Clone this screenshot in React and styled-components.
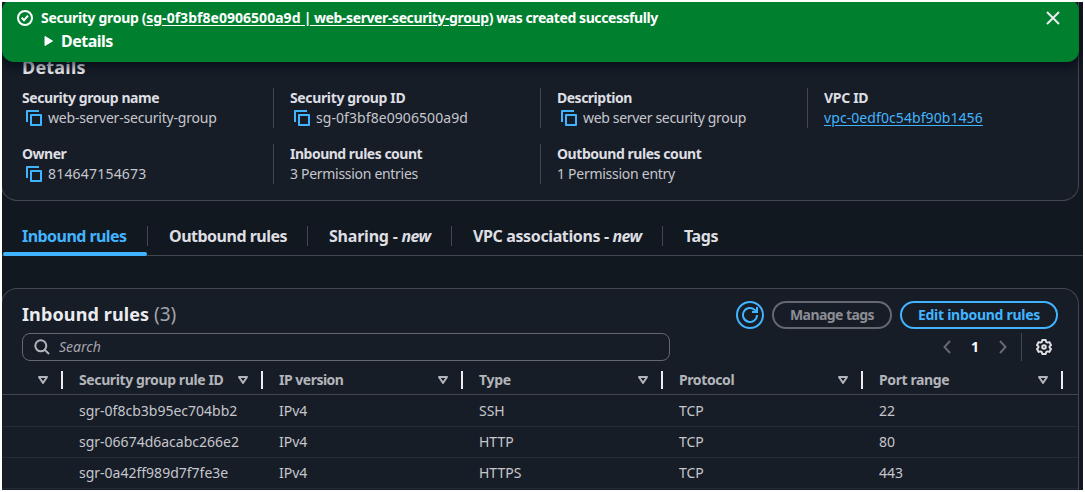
import React from "react";
import styled, { createGlobalStyle } from "styled-components";

const GlobalStyle = createGlobalStyle`
  *, *::before, *::after { box-sizing: border-box; }
  html, body { margin: 0; background: #fff; }
  body { font-family: "Noto Sans", "Open Sans", sans-serif; font-size: 14px; line-height: 20px; color: #c6c6cd; }
`;

const Frame = styled.div`
  position: relative;
  width: 1081px;
  height: 488px;
  margin: 2px;
  overflow: hidden;
  background: #12181f;
`;

const T = styled.span`
  white-space: pre;
  letter-spacing: ${(p) => p.$ls || 0}px;
`;

/* Success notification pinned over the scrolled page */
const Flash = styled.div`
  position: absolute;
  top: -3px;
  left: 0;
  z-index: 2;
  width: 1077px;
  height: 63px;
  padding: 9px 18px 0 15px;
  display: flex;
  align-items: flex-start;
  gap: 8px;
  border-radius: 12px;
  background: #00802f;
  color: #fff;
  box-shadow: 0 4px 8px 1px rgba(0, 7, 22, 0.6);
`;
const FlashIcon = styled.svg`
  width: 16px;
  height: 16px;
  margin-top: 2px;
  flex: none;
`;
const FlashBody = styled.div`
  flex: 1;
  font-weight: 700;
`;
const FlashLine = styled.div`
  height: 21px;
  line-height: 20px;
  white-space: pre;
`;
const FlashLink = styled.a`
  color: inherit;
  text-decoration: underline;
  text-underline-offset: 2px;
`;
const FlashToggle = styled.div`
  display: flex;
  align-items: center;
  gap: 8px;
  height: 24px;
  padding-left: 3px;
  font-size: 16px;
  line-height: 24px;
`;
const CloseIcon = styled.svg`
  width: 16px;
  height: 16px;
  margin-top: 2px;
  flex: none;
`;

const Card = styled.section`
  width: 1078px;
  margin-left: -1px;
  background: #161d26;
  border: 1px solid #424650;
  border-radius: 16px;
`;
const DetailsCard = styled(Card)`
  height: 199px;
  border-top: 0;
  border-radius: 0 0 16px 16px;
  padding: 53px 0 0 20px;
`;
const CardTitle = styled.h2`
  margin: 0;
  font-size: 18px;
  line-height: 24px;
  font-weight: 700;
  color: #ebebf0;
`;
const DetailsGrid = styled.div`
  display: grid;
  grid-template-columns: repeat(4, 267px);
  row-gap: 16px;
  margin-top: 9px;
`;
const Field = styled.div`
  height: 40px;
  padding-left: ${(p) => (p.$first ? 0 : 16)}px;
  margin-left: ${(p) => (p.$first ? 0 : -16)}px;
  border-left: ${(p) => (p.$first ? "0" : "1px solid #424650")};
`;
const FieldLabel = styled.div`
  height: 20px;
  font-weight: 700;
  color: #dedee3;
`;
const FieldValue = styled.div`
  display: flex;
  align-items: center;
  height: 20px;
  gap: 6px;
  padding-left: ${(p) => (p.$copy ? 4 : 0)}px;
`;
const VpcLink = styled.a`
  color: #42b4ff;
  text-decoration: underline;
  text-underline-offset: 2px;
`;

const Tabs = styled.nav`
  display: flex;
  height: 55px;
  padding-top: 16px;
  border-bottom: 1px solid #424650;
`;
const Tab = styled.div`
  position: relative;
  width: ${(p) => p.$w}px;
  height: 38px;
  padding: 9px 0 0 ${(p) => (p.$active ? 20 : 21)}px;
  font-size: 16px;
  line-height: 20px;
  font-weight: 700;
  white-space: pre;
  color: ${(p) => (p.$active ? "#42b4ff" : "#dedee3")};
  &:not(:last-child)::after {
    content: "";
    position: absolute;
    right: 0;
    top: 9px;
    width: 1px;
    height: 20px;
    background: #424650;
  }
`;
const ActiveBar = styled.span`
  position: absolute;
  left: 1px;
  bottom: -1px;
  width: 144px;
  height: 4px;
  border-radius: 2px;
  background: #42b4ff;
`;

const RulesCard = styled(Card)`
  height: 240px;
  margin-top: 32px;
  border-bottom: 0;
  border-radius: 16px 16px 0 0;
`;
const RulesHeader = styled.header`
  display: flex;
  align-items: flex-start;
  height: 44px;
  padding: 12px 20px 0 20px;
`;
const RulesTitle = styled(CardTitle)`
  margin-top: 1px;
`;
const Count = styled.span`
  font-weight: 400;
  font-size: 19px;
  line-height: 20px;
  color: #a4a4ad;
`;
const Actions = styled.div`
  display: flex;
  gap: 8px;
  margin-left: auto;
`;
const Button = styled.button`
  display: flex;
  align-items: center;
  justify-content: center;
  width: ${(p) => p.$w}px;
  height: 28px;
  padding: 0;
  border: 2px solid ${(p) => (p.disabled ? "#656871" : "#42b4ff")};
  border-radius: 20px;
  background: transparent;
  font: 700 14px/20px "Noto Sans", sans-serif;
  color: ${(p) => (p.disabled ? "#8c8c94" : "#42b4ff")};
`;
const Toolbar = styled.div`
  display: flex;
  align-items: center;
  height: 28px;
  padding: 0 26px 0 20px;
`;
const Search = styled.div`
  display: flex;
  align-items: center;
  gap: 9px;
  width: 648px;
  height: 28px;
  padding-left: 11px;
  border: 1px solid #656871;
  border-radius: 8px;
  color: #a4a4ad;
  font-style: italic;
`;
const Pager = styled.div`
  display: flex;
  align-items: center;
  margin-left: auto;
  height: 28px;
`;
const PageNumber = styled.span`
  width: 48px;
  text-align: center;
  font-weight: 700;
  color: #fff;
`;
const Divider = styled.span`
  width: 1px;
  height: 28px;
  margin: 0 14px;
  background: #424650;
`;

const Row = styled.div`
  display: grid;
  grid-template-columns: 61px repeat(5, 200px) 15px;
  align-items: center;
  height: ${(p) => p.$h || 31}px;
  border-bottom: 1px solid #232b37;
  color: #c6c6cd;
`;
const HeadRow = styled(Row)`
  height: 34px;
  border-bottom-color: #424650;
  font-weight: 700;
  color: #b4b4bb;
`;
const Cell = styled.div`
  padding-left: 16px;
`;
const HeadCell = styled.div`
  display: flex;
  align-items: center;
  justify-content: space-between;
  height: 18px;
  margin-top: 4px;
  padding: 0 13px 0 16px;
  border-right: 2px solid #ebebf0;
`;

const CopyIcon = () => (
  <svg width="16" height="16" viewBox="0 0 16 16" fill="none" stroke="#42b4ff" strokeWidth="2" strokeLinejoin="round">
    <path d="M1 12V1h12" />
    <path d="M5 5h10v10H5z" />
  </svg>
);
const SortIcon = () => (
  <svg width="10" height="8" viewBox="0 0 10 8" fill="none" stroke="#b4b4bb" strokeWidth="2" strokeLinejoin="round">
    <path d="M1 1h8L5 7z" />
  </svg>
);
const Chevron = ({ d }) => (
  <svg width="8" height="14" viewBox="0 0 8 14" fill="none" stroke="#656871" strokeWidth="2">
    <path d={d} />
  </svg>
);

const fields = [
  { label: "Security group name", ls: -0.42, value: "web-server-security-group", vls: -0.2, copy: true },
  { label: "Security group ID", ls: -0.36, value: "sg-0f3bf8e0906500a9d", vls: 0.07, copy: true },
  { label: "Description", ls: -0.5, value: "web server security group", vls: -0.32, copy: true },
  { label: "VPC ID", ls: -0.3, value: "vpc-0edf0c54bf90b1456", vls: 0.08, link: true },
  { label: "Owner", ls: -0.5, value: "814647154673", vls: 0.2, copy: true },
  { label: "Inbound rules count", ls: -0.5, value: "3 Permission entries", vls: -0.3 },
  { label: "Outbound rules count", ls: -0.45, value: "1 Permission entry", vls: -0.27 },
];
const columns = [
  ["Security group rule ID", -0.39],
  ["IP version", -0.5],
  ["Type", -0.3],
  ["Protocol", -0.4],
  ["Port range", -0.4],
];
const rules = [
  ["sgr-0f8cb3b95ec704bb2", "IPv4", "SSH", "TCP", "22"],
  ["sgr-06674d6acabc266e2", "IPv4", "HTTP", "TCP", "80"],
  ["sgr-0a42ff989d7f7fe3e", "IPv4", "HTTPS", "TCP", "443"],
];

export default function App() {
  return (
    <>
      <GlobalStyle />
      <Frame>
        <Flash>
          <FlashIcon viewBox="0 0 16 16" fill="none" stroke="#fff" strokeWidth="2">
            <circle cx="8" cy="8" r="7" />
            <path d="M4.7 7.8l2.3 2.4 4-4.6" />
          </FlashIcon>
          <FlashBody>
            <FlashLine>
              <T $ls={-0.33}>Security group (</T>
              <FlashLink>
                <T $ls={0.03}>sg-0f3bf8e0906500a9d</T>
                <T $ls={-0.5}> | </T>
                <T $ls={-0.4}>web-server-security-group</T>
              </FlashLink>
              <T $ls={-0.42}>) was created successfully</T>
            </FlashLine>
            <FlashToggle>
              <svg width="9" height="12" viewBox="0 0 9 12"><path d="M1 1.5v9L8.500 6z" fill="#fff" stroke="#fff" strokeLinejoin="round" /></svg>
              <T $ls={-0.5}>Details</T>
            </FlashToggle>
          </FlashBody>
          <CloseIcon viewBox="0 0 16 16" fill="none" stroke="#ebebf0" strokeWidth="2">
            <path d="M2 2l12 12M14 2L2 14" />
          </CloseIcon>
        </Flash>

        <DetailsCard>
          <CardTitle><T $ls={0.2}>Details</T></CardTitle>
          <DetailsGrid>
            {fields.map((f, i) => (
              <Field key={f.label} $first={i % 4 === 0}>
                <FieldLabel><T $ls={f.ls}>{f.label}</T></FieldLabel>
                <FieldValue $copy={f.copy}>
                  {f.copy && <CopyIcon />}
                  {f.link ? <VpcLink><T $ls={f.vls}>{f.value}</T></VpcLink> : <T $ls={f.vls}>{f.value}</T>}
                </FieldValue>
              </Field>
            ))}
          </DetailsGrid>
        </DetailsCard>

        <Tabs>
          <Tab $active $w={146}><T $ls={-0.55}>Inbound rules</T><ActiveBar /></Tab>
          <Tab $w={160}><T $ls={-0.5}>Outbound rules</T></Tab>
          <Tab $w={144}><T $ls={-0.22}>Sharing - </T><T as="em" $ls={-0.6}>new</T></Tab>
          <Tab $w={211}><T $ls={-0.38}>VPC associations - </T><T as="em" $ls={-0.6}>new</T></Tab>
          <Tab $w={80}><T $ls={-0.4}>Tags</T></Tab>
        </Tabs>

        <RulesCard>
          <RulesHeader>
            <RulesTitle><T $ls={0.12}>Inbound rules </T><Count>(3)</Count></RulesTitle>
            <Actions>
              <Button $w={28} aria-label="Refresh">
                <svg width="16" height="16" viewBox="0 0 16 16" fill="none" stroke="#42b4ff" strokeWidth="2">
                  <path d="M15 8a7 7 0 1 1-2.2-5.1L14.500 5" />
                  <path d="M15 0v5h-5" />
                </svg>
              </Button>
              <Button $w={120} disabled><T $ls={-0.55}>Manage tags</T></Button>
              <Button $w={158}><T $ls={-0.28}>Edit inbound rules</T></Button>
            </Actions>
          </RulesHeader>
          <Toolbar>
            <Search>
              <svg width="16" height="16" viewBox="0 0 16 16" fill="none" stroke="#b4b4bb" strokeWidth="2">
                <circle cx="6.8" cy="6.8" r="5.5" />
                <path d="M10.6 10.6L15 15" />
              </svg>
              <T>Search</T>
            </Search>
            <Pager>
              <Chevron d="M7 1L1.5 7 7 13" />
              <PageNumber>1</PageNumber>
              <Chevron d="M1 1l5.500 6L1 13" />
              <Divider />
              <svg width="16" height="16" viewBox="0 0 16 16" fill="none" stroke="#dedee3" strokeWidth="2" strokeLinejoin="round">
                <path d="M6.300 1h3.400l.5 1.900 1.200.7 1.900-.5 1.700 2.900-1.400 1.400v1.200l1.400 1.400-1.700 2.900-1.900-.5-1.200.7-.5 1.900H6.300l-.5-1.900-1.200-.7-1.900.5L1 10l1.400-1.400V7.400L1 6l1.700-2.900 1.900.5 1.200-.7z" />
                <circle cx="8" cy="8" r="1.800" />
              </svg>
            </Pager>
          </Toolbar>
          <HeadRow>
            <HeadCell><span /><SortIcon /></HeadCell>
            {columns.map(([name, ls]) => (
              <HeadCell key={name}><T $ls={ls}>{name}</T><SortIcon /></HeadCell>
            ))}
          </HeadRow>
          {rules.map((r, i) => (
            <Row key={r[0]} $h={i === 0 ? 32 : 31}>
              <span />
              {r.map((v, j) => <Cell key={j}><T>{v}</T></Cell>)}
            </Row>
          ))}
        </RulesCard>
      </Frame>
    </>
  );
}
